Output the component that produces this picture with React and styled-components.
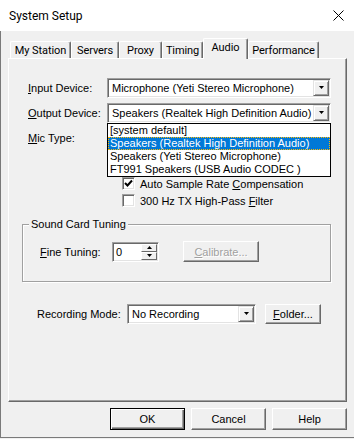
import styled, { createGlobalStyle } from 'styled-components';

const GlobalStyle = createGlobalStyle`
  html, body {
    margin: 0;
    padding: 0;
    background: #f0f0f0;
  }
  body {
    font-family: "Liberation Sans", Arial, sans-serif;
    font-size: 11px;
    color: #000;
  }
`;

const outputDevices = [
  '[system default]',
  'Speakers (Realtek High Definition Audio)',
  'Speakers (Yeti Stereo Microphone)',
  'FT991 Speakers (USB Audio CODEC )',
];

const tabs = [
  { label: 'My Station', w: 61 },
  { label: 'Servers', w: 48 },
  { label: 'Proxy', w: 43 },
  { label: 'Timing', w: 41 },
  { label: 'Audio', w: 45, active: true },
  { label: 'Performance', w: 71 },
];

const DownArrow = ({ size = 5 }) => (
  <svg width={size + 2} height={Math.ceil(size / 2) + 1} viewBox={`0 0 ${size + 2} ${Math.ceil(size / 2) + 1}`}>
    <polygon points={`1,0 ${size + 1},0 ${(size + 2) / 2},${Math.ceil(size / 2)}`} fill="#000" />
  </svg>
);

const Combo = ({ value, width, children }) => (
  <ComboBox $w={width}>
    <ComboValue>{value}</ComboValue>
    <DropButton>
      <DownArrow />
    </DropButton>
    {children}
  </ComboBox>
);

const Check = ({ checked, children }) => (
  <CheckRow>
    <CheckBox>
      {checked && (
        <svg width="9" height="9" viewBox="0 0 9 9">
          <polyline points="1,4 3.5,6.5 8,1.5" fill="none" stroke="#000" strokeWidth="2" />
        </svg>
      )}
    </CheckBox>
    <span>{children}</span>
  </CheckRow>
);

const App = () => {
  return (
    <>
      <GlobalStyle />
      <Window>
        <TitleBar>
          <span>System Setup</span>
          <svg width="11" height="11" viewBox="0 0 11 11">
            <path d="M0.5 0.5 L10.5 10.5 M10.5 0.5 L0.5 10.5" stroke="#000" strokeWidth="1" />
          </svg>
        </TitleBar>
        <Body>
          <TabStrip>
            {tabs.map((t) => (
              <Tab key={t.label} $w={t.w} $active={t.active}>
                {t.label}
              </Tab>
            ))}
          </TabStrip>
          <Panel>
            <FieldRow $mt={19}>
              <Label $w={79}>
                <u>I</u>nput Device:
              </Label>
              <Combo value="Microphone (Yeti Stereo Microphone)" width={224} />
            </FieldRow>
            <FieldRow $mt={5} $front>
              <Label $w={79}>
                <u>O</u>utput Device:
              </Label>
              <Combo value="Speakers (Realtek High Definition Audio)" width={224}>
                <DropList>
                  {outputDevices.map((d, i) => (
                    <ListItem key={d} $selected={i === 1}>
                      {d}
                    </ListItem>
                  ))}
                </DropList>
              </Combo>
            </FieldRow>
            <FieldRow $mt={5}>
              <Label $w={79}>
                <u>M</u>ic Type:
              </Label>
              <Combo value="" width={224} />
            </FieldRow>
            <Checks>
              <Check checked>
                Auto Sample Rate <u>C</u>ompensation
              </Check>
              <Check>
                300 Hz TX High-Pass <u>F</u>ilter
              </Check>
            </Checks>
            <GroupBox>
              <legend>Sound Card Tuning</legend>
              <TuningRow>
                <Label $w={72}>
                  <u>F</u>ine Tuning:
                </Label>
                <Spin>
                  <SpinValue>0</SpinValue>
                  <SpinButtons>
                    <SpinButton>
                      <svg width="5" height="3" viewBox="0 0 5 3">
                        <polygon points="2.5,0 5,3 0,3" fill="#000" />
                      </svg>
                    </SpinButton>
                    <SpinButton>
                      <svg width="5" height="3" viewBox="0 0 5 3">
                        <polygon points="0,0 5,0 2.5,3" fill="#000" />
                      </svg>
                    </SpinButton>
                  </SpinButtons>
                </Spin>
                <PushButton $w={76} $h={21} $ml={24} disabled>
                  <u>C</u>alibrate...
                </PushButton>
              </TuningRow>
            </GroupBox>
            <RecordingRow>
              <Label $w={90}>Recording Mode:</Label>
              <Combo value="No Recording" width={129} />
              <PushButton $w={56} $h={20} $ml={9}>
                <u>F</u>older...
              </PushButton>
            </RecordingRow>
          </Panel>
          <ButtonBar>
            <PushButton $w={75} $h={22} $default>
              OK
            </PushButton>
            <PushButton $w={75} $h={22}>
              Cancel
            </PushButton>
            <PushButton $w={75} $h={22}>
              Help
            </PushButton>
          </ButtonBar>
        </Body>
      </Window>
    </>
  );
};

const Window = styled.div`
  width: 354px;
  height: 439px;
  display: flex;
  flex-direction: column;
  background: #f0f0f0;
  overflow: hidden;
`;

const TitleBar = styled.div`
  height: 31px;
  flex-shrink: 0;
  background: #fff;
  display: flex;
  align-items: center;
  justify-content: space-between;
  padding: 0 10px 0 9px;
  font-family: Roboto, "Liberation Sans", sans-serif;
  font-size: 12px;
`;

const Body = styled.div`
  height: 407px;
  box-sizing: border-box;
  border-left: 1px solid #7a7a7a;
  border-bottom: 1px solid #7a7a7a;
  padding: 7px 7px 0 7px;
  display: flex;
  flex-direction: column;
`;

const TabStrip = styled.div`
  display: flex;
  align-items: flex-end;
  height: 20px;
  padding-left: 2px;
  position: relative;
  z-index: 2;
`;

const Tab = styled.div`
  width: ${(p) => p.$w}px;
  height: ${(p) => (p.$active ? 21 : 17)}px;
  margin-bottom: ${(p) => (p.$active ? -1 : 0)}px;
  box-sizing: border-box;
  background: #f0f0f0;
  border-top: 1px solid #fff;
  border-left: 1px solid #fff;
  border-right: 1px solid #696969;
  box-shadow: inset -1px 0 #a0a0a0;
  border-radius: 2px 2px 0 0;
  font-family: Roboto, "Liberation Sans", sans-serif;
  font-size: 11px;
  letter-spacing: -0.1px;
  display: flex;
  justify-content: center;
  align-items: ${(p) => (p.$active ? 'flex-start' : 'center')};
  padding-top: ${(p) => (p.$active ? 2 : 0)}px;
  white-space: nowrap;
`;

const Panel = styled.div`
  position: relative;
  z-index: 1;
  width: 339px;
  height: 344px;
  box-sizing: border-box;
  border-top: 1px solid #fff;
  border-left: 1px solid #fff;
  border-right: 1px solid #696969;
  border-bottom: 1px solid #696969;
  box-shadow: inset -1px -1px #a0a0a0;
  display: flex;
  flex-direction: column;
`;

const FieldRow = styled.div`
  display: flex;
  align-items: center;
  margin-top: ${(p) => p.$mt}px;
  padding-left: 19px;
  position: relative;
  z-index: ${(p) => (p.$front ? 3 : 1)};
`;

const Label = styled.span`
  width: ${(p) => p.$w}px;
  flex-shrink: 0;
  white-space: nowrap;
`;

const ComboBox = styled.div`
  position: relative;
  width: ${(p) => p.$w}px;
  height: 20px;
  box-sizing: border-box;
  background: #fff;
  border: 1px solid;
  border-color: #a0a0a0 #fff #fff #a0a0a0;
  box-shadow: inset 1px 1px #696969, inset -1px -1px #e3e3e3;
  display: flex;
  align-items: center;
  padding: 1px 1px 1px 2px;
`;

const ComboValue = styled.span`
  flex: 1;
  padding-left: 2px;
  white-space: nowrap;
  overflow: hidden;
`;

const DropButton = styled.span`
  width: 16px;
  height: 16px;
  box-sizing: border-box;
  background: #f0f0f0;
  border: 1px solid;
  border-color: #e3e3e3 #696969 #696969 #e3e3e3;
  box-shadow: inset 1px 1px #fff, inset -1px -1px #a0a0a0;
  display: flex;
  align-items: center;
  justify-content: center;
`;

const DropList = styled.div`
  position: absolute;
  top: 100%;
  left: -1px;
  width: 224px;
  box-sizing: border-box;
  background: #fff;
  border: 1px solid #000;
  margin-top: 1px;
`;

const ListItem = styled.div`
  height: 13px;
  line-height: 13px;
  padding-left: 2px;
  white-space: nowrap;
  background: ${(p) => (p.$selected ? '#0078d7' : 'transparent')};
  color: ${(p) => (p.$selected ? '#fff' : '#000')};
  outline: ${(p) => (p.$selected ? '1px dotted #ffb900' : 'none')};
  outline-offset: -1px;
`;

const Checks = styled.div`
  display: flex;
  flex-direction: column;
  gap: 4px;
  margin-top: 29px;
  padding-left: 113px;
`;

const CheckRow = styled.label`
  display: flex;
  align-items: center;
  gap: 5px;
  height: 13px;
`;

const CheckBox = styled.span`
  width: 13px;
  height: 13px;
  box-sizing: border-box;
  background: #fff;
  border: 1px solid;
  border-color: #a0a0a0 #fff #fff #a0a0a0;
  box-shadow: inset 1px 1px #696969, inset -1px -1px #e3e3e3;
  display: flex;
  align-items: center;
  justify-content: center;
`;

const GroupBox = styled.fieldset`
  margin: 11px 0 0 13px;
  width: 309px;
  height: 64px;
  box-sizing: border-box;
  padding: 0 0 0 17px;
  border: 1px solid #a0a0a0;
  box-shadow: inset 1px 1px #fff, 1px 1px #fff;

  legend {
    margin-left: -11px;
    padding: 0 2px;
    background: #f0f0f0;
    line-height: 13px;
  }
`;

const TuningRow = styled.div`
  display: flex;
  align-items: center;
  margin-top: 10px;
`;

const Spin = styled.div`
  width: 47px;
  height: 20px;
  box-sizing: border-box;
  background: #fff;
  border: 1px solid;
  border-color: #a0a0a0 #fff #fff #a0a0a0;
  box-shadow: inset 1px 1px #696969, inset -1px -1px #e3e3e3;
  display: flex;
  padding: 1px;
`;

const SpinValue = styled.span`
  flex: 1;
  padding-left: 2px;
  line-height: 16px;
`;

const SpinButtons = styled.span`
  width: 16px;
  display: flex;
  flex-direction: column;
`;

const SpinButton = styled.span`
  flex: 1;
  box-sizing: border-box;
  background: #f0f0f0;
  border: 1px solid;
  border-color: #fff #696969 #696969 #fff;
  display: flex;
  align-items: center;
  justify-content: center;
`;

const RecordingRow = styled.div`
  display: flex;
  align-items: center;
  margin-top: 22px;
  padding-left: 28px;
`;

const PushButton = styled.button`
  width: ${(p) => p.$w}px;
  height: ${(p) => p.$h}px;
  margin-left: ${(p) => p.$ml || 0}px;
  box-sizing: border-box;
  padding: 0;
  font: inherit;
  font-family: "Liberation Sans", Arial, sans-serif;
  font-size: 11px;
  color: #000;
  background: #f0f0f0;
  border: 1px solid;
  border-color: ${(p) => (p.$default ? '#000' : '#fff #696969 #696969 #fff')};
  box-shadow: ${(p) =>
    p.$default
      ? 'inset 1px 1px #fff, inset -1px -1px #696969, inset -2px -2px #a0a0a0'
      : 'inset -1px -1px #a0a0a0'};

  &:disabled {
    color: #a0a0a0;
    text-shadow: 1px 1px #fff;
  }
`;

const ButtonBar = styled.div`
  display: flex;
  justify-content: flex-end;
  gap: 6px;
  margin-top: 6px;
  padding-right: 0px;
`;

export default App;
